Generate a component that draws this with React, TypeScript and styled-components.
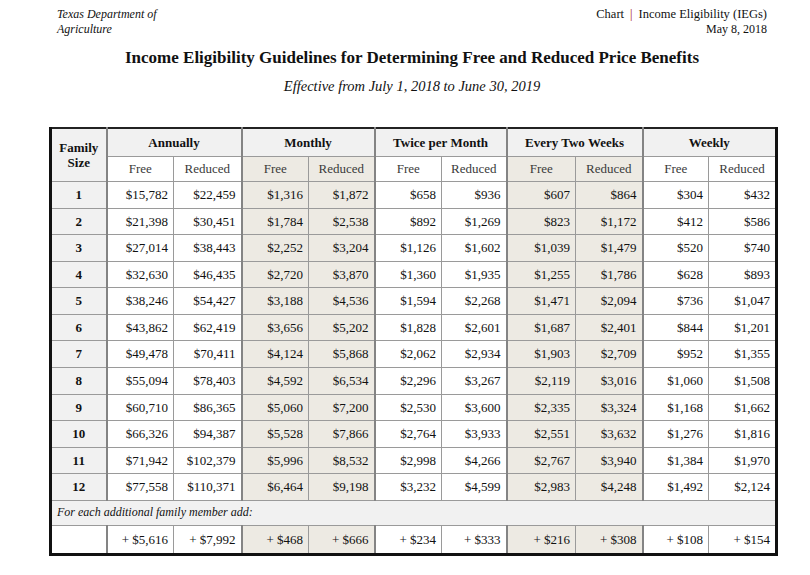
import React from 'react';
import styled, { createGlobalStyle } from 'styled-components';

const Global = createGlobalStyle`
  html, body { margin: 0; padding: 0; background: #fff; }
  body { font-family: "Liberation Serif", "Times New Roman", serif; color: #111; }
`;

const Page = styled.div`
  width: 726px;
  margin-left: 49px;
  padding-top: 7px;
`;

const TopBar = styled.header`
  display: flex;
  justify-content: space-between;
  padding: 0 8px;
  font-size: 12px;
  line-height: 15px;
`;

const Agency = styled.div`
  font-style: italic;
  width: 130px;
`;

const Meta = styled.div`
  text-align: right;
`;

const MetaLine = styled.div<{ $size: number }>`
  font-size: ${(p) => p.$size}px;
`;

const Divider = styled.span`
  color: #a3141c;
  margin: 0 6px;
`;

const Title = styled.h1`
  margin: 10px 0 0;
  text-align: center;
  font-size: 17px;
  line-height: 22px;
  font-weight: bold;
`;

const Subtitle = styled.p`
  margin: 8px 0 0;
  text-align: center;
  font-style: italic;
  font-size: 14.5px;
  line-height: 18px;
`;

const Table = styled.table`
  margin-top: 32px;
  width: 726px;
  table-layout: fixed;
  border-collapse: collapse;
  border-top: 2px solid #222;
  border-left: 3px solid #111;
  border-right: 3px solid #111;
  border-bottom: 3px solid #111;
  font-size: 13px;
`;

const Row = styled.tr<{ $h: number }>`
  height: ${(p) => p.$h}px;
`;

const Cell = styled.td<{
  $bg?: 'gray' | 'beige' | 'white';
  $group?: boolean;
  $align?: 'left' | 'center' | 'right';
  $bold?: boolean;
  $muted?: boolean;
  $italic?: boolean;
}>`
  border: 1px solid #9a9a9a;
  border-left: ${(p) => (p.$group ? '2px solid #848484' : '1px solid #9a9a9a')};
  background: ${(p) =>
    p.$bg === 'gray' ? '#f1f1f1' : p.$bg === 'beige' ? '#edeae3' : '#fff'};
  text-align: ${(p) => p.$align || 'right'};
  font-weight: ${(p) => (p.$bold ? 'bold' : 'normal')};
  font-style: ${(p) => (p.$italic ? 'italic' : 'normal')};
  font-size: ${(p) => (p.$italic ? '12px' : '13px')};
  color: ${(p) => (p.$muted ? '#3a3a3a' : '#111')};
  padding: 0 5px;
  vertical-align: middle;
  white-space: nowrap;
  line-height: 15px;
`;

const groups = ['Annually', 'Monthly', 'Twice per Month', 'Every Two Weeks', 'Weekly'];
const widths = [56, 67, 68, 67, 66, 67, 65, 69, 67, 66, 68];

const rows: string[][] = [
  ['15,782', '22,459', '1,316', '1,872', '658', '936', '607', '864', '304', '432'],
  ['21,398', '30,451', '1,784', '2,538', '892', '1,269', '823', '1,172', '412', '586'],
  ['27,014', '38,443', '2,252', '3,204', '1,126', '1,602', '1,039', '1,479', '520', '740'],
  ['32,630', '46,435', '2,720', '3,870', '1,360', '1,935', '1,255', '1,786', '628', '893'],
  ['38,246', '54,427', '3,188', '4,536', '1,594', '2,268', '1,471', '2,094', '736', '1,047'],
  ['43,862', '62,419', '3,656', '5,202', '1,828', '2,601', '1,687', '2,401', '844', '1,201'],
  ['49,478', '70,411', '4,124', '5,868', '2,062', '2,934', '1,903', '2,709', '952', '1,355'],
  ['55,094', '78,403', '4,592', '6,534', '2,296', '3,267', '2,119', '3,016', '1,060', '1,508'],
  ['60,710', '86,365', '5,060', '7,200', '2,530', '3,600', '2,335', '3,324', '1,168', '1,662'],
  ['66,326', '94,387', '5,528', '7,866', '2,764', '3,933', '2,551', '3,632', '1,276', '1,816'],
  ['71,942', '102,379', '5,996', '8,532', '2,998', '4,266', '2,767', '3,940', '1,384', '1,970'],
  ['77,558', '110,371', '6,464', '9,198', '3,232', '4,599', '2,983', '4,248', '1,492', '2,124'],
];
const extra = ['5,616', '7,992', '468', '666', '234', '333', '216', '308', '108', '154'];

const shadeOf = (i: number): 'beige' | 'white' => (Math.floor(i / 2) % 2 === 1 ? 'beige' : 'white');

const rowHeights = [27, 26, 27, 26, 27, 26, 27, 27, 26, 27, 26, 27];

export default function App() {
  return (
    <>
      <Global />
      <Page>
        <TopBar>
          <Agency>Texas Department of Agriculture</Agency>
          <Meta>
            <MetaLine $size={12.5}>
              Chart<Divider>|</Divider>Income Eligibility (IEGs)
            </MetaLine>
            <MetaLine $size={12}>May 8, 2018</MetaLine>
          </Meta>
        </TopBar>
        <Title>Income Eligibility Guidelines for Determining Free and Reduced Price Benefits</Title>
        <Subtitle>Effective from July 1, 2018 to June 30, 2019</Subtitle>
        <Table>
          <colgroup>
            {widths.map((w, i) => (
              <col key={i} style={{ width: w }} />
            ))}
          </colgroup>
          <thead>
            <Row $h={28}>
              <Cell as="th" rowSpan={2} $bg="gray" $align="center" $bold>
                Family
                <br />
                Size
              </Cell>
              {groups.map((g) => (
                <Cell as="th" key={g} colSpan={2} $bg="gray" $align="center" $bold $group>
                  {g}
                </Cell>
              ))}
            </Row>
            <Row $h={25}>
              {groups.map((g, gi) => (
                <React.Fragment key={g}>
                  <Cell as="th" $bg={shadeOf(gi * 2)} $align="center" $muted $group>
                    Free
                  </Cell>
                  <Cell as="th" $bg={shadeOf(gi * 2)} $align="center" $muted>
                    Reduced
                  </Cell>
                </React.Fragment>
              ))}
            </Row>
          </thead>
          <tbody>
            {rows.map((r, ri) => (
              <Row key={ri} $h={rowHeights[ri]}>
                <Cell $bg="gray" $align="center" $bold>
                  {ri + 1}
                </Cell>
                {r.map((v, ci) => (
                  <Cell key={ci} $bg={shadeOf(ci)} $group={ci % 2 === 0}>
                    ${v}
                  </Cell>
                ))}
              </Row>
            ))}
            <Row $h={25}>
              <Cell colSpan={11} $bg="gray" $align="left" $italic>
                For each additional family member add:
              </Cell>
            </Row>
            <Row $h={29}>
              <Cell $bg="white" />
              {extra.map((v, ci) => (
                <Cell key={ci} $bg={shadeOf(ci)} $group={ci % 2 === 0}>
                  + ${v}
                </Cell>
              ))}
            </Row>
          </tbody>
        </Table>
      </Page>
    </>
  );
}
